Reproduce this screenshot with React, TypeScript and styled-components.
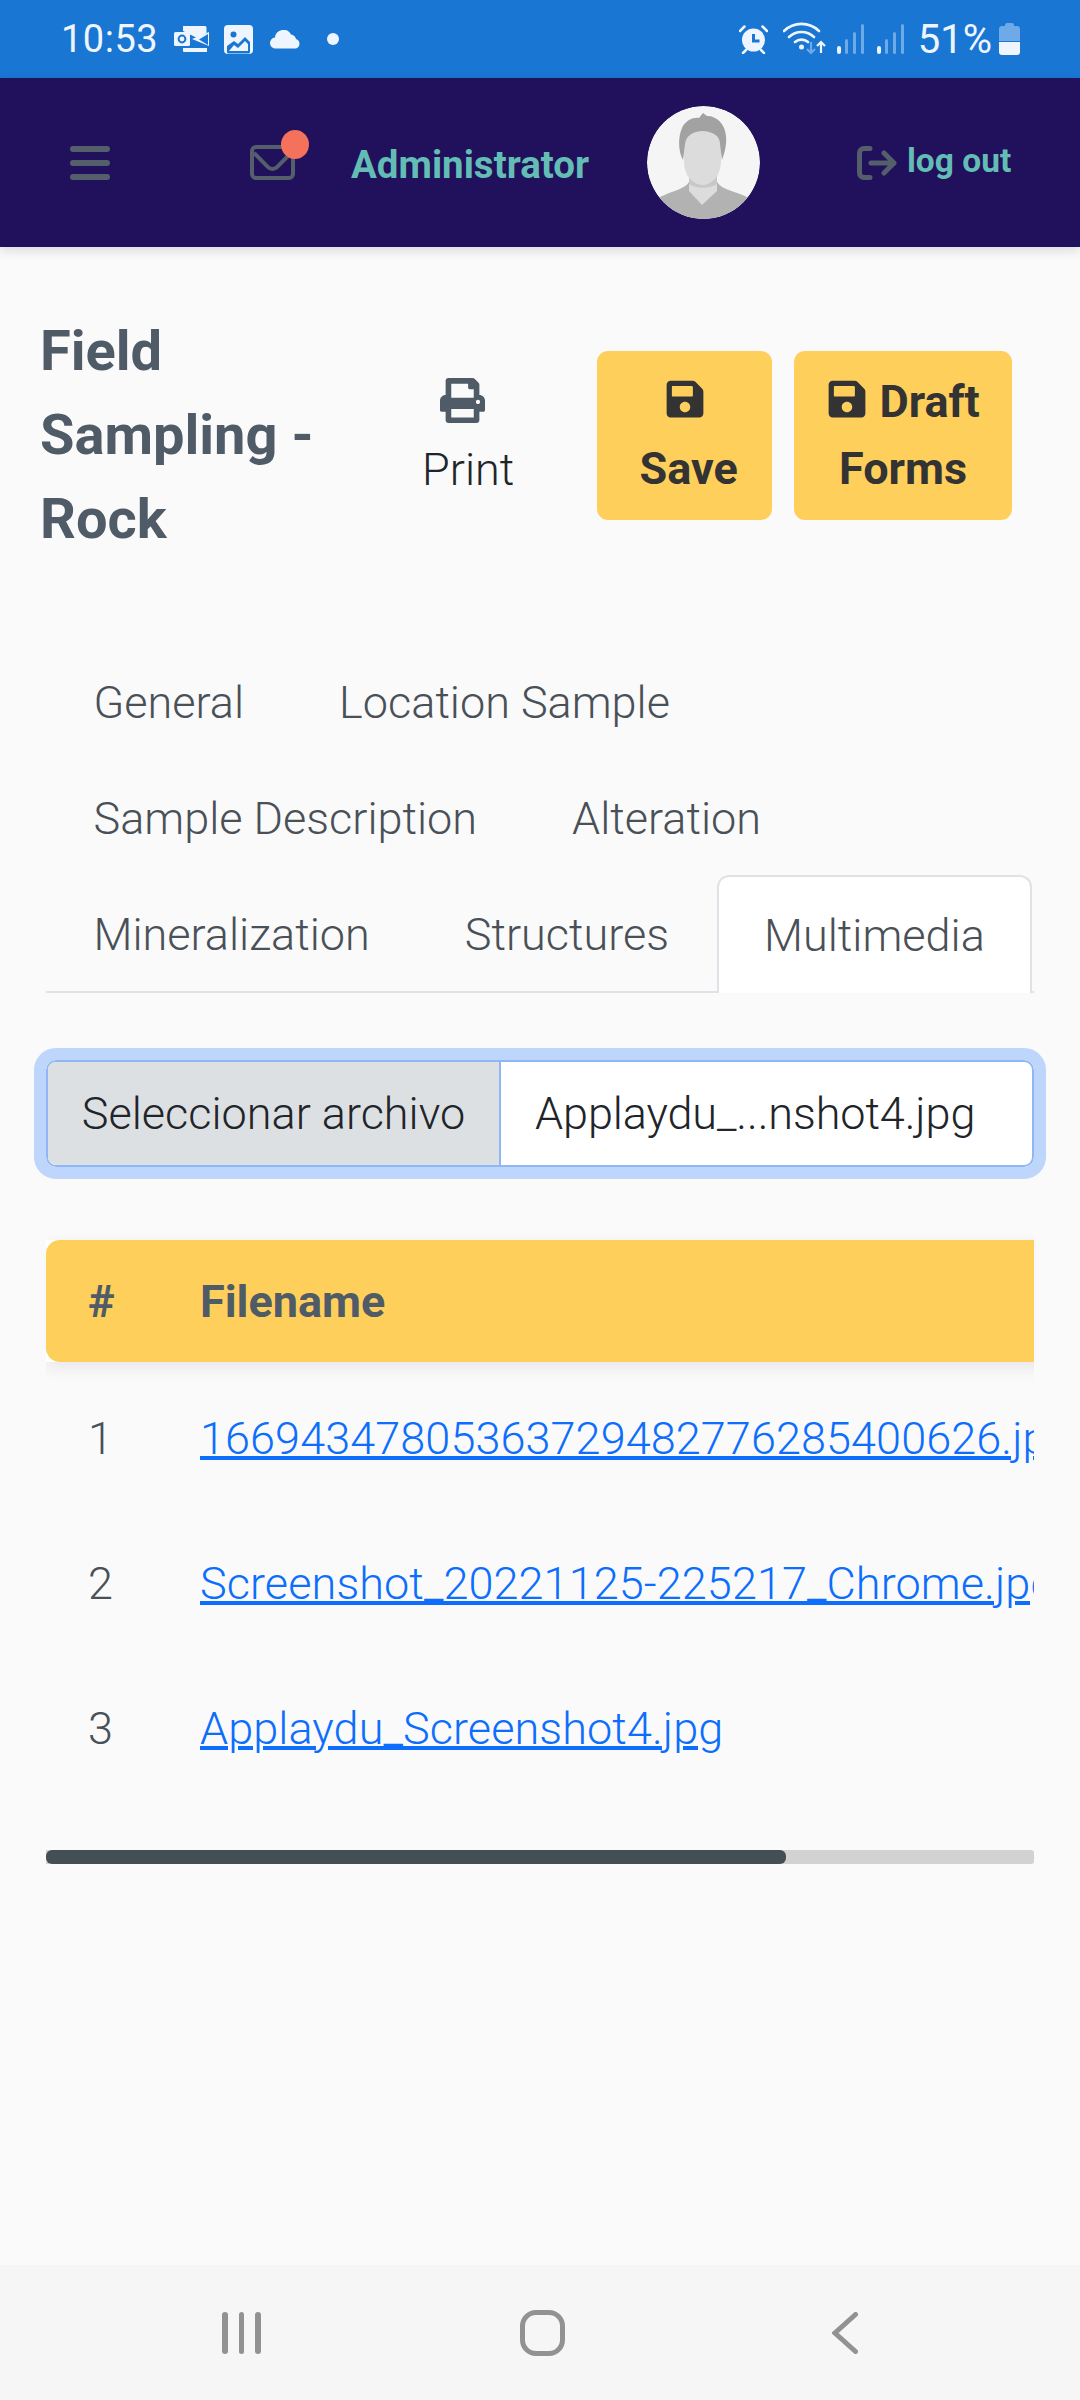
import React from 'react';
import styled, { createGlobalStyle } from 'styled-components';
import { FaPrint, FaSave } from 'react-icons/fa';

const GlobalStyle = createGlobalStyle`
    html, body {
        margin: 0;
        padding: 0;
        background: #fafafa;
        font-family: 'Roboto', 'Liberation Sans', sans-serif;
    }
    * {
        box-sizing: border-box;
    }
`;

const tabRows = [
    [{ label: 'General' }, { label: 'Location Sample' }],
    [{ label: 'Sample Description' }, { label: 'Alteration' }],
    [{ label: 'Mineralization' }, { label: 'Structures' }, { label: 'Multimedia', active: true }],
];

const files = [
    '16694347805363729482776285400626.jpg',
    'Screenshot_20221125-225217_Chrome.jpg',
    'Applaydu_Screenshot4.jpg',
];

const OutlookIcon = () => (
    <svg width="35" height="26" viewBox="0 0 35 26" fill="#eef5fe">
        <path d="M9 0h22a1.500 1.500 0 0 1 1.500 1.500V7L23 12 9 5z" />
        <rect x="0" y="6" width="16" height="14" rx="1.500" />
        <circle cx="8" cy="13" r="3.400" fill="none" stroke="#1976d2" strokeWidth="2" />
        <path d="M18 13l17-7v14zM9 22h24v4H10a1 1 0 0 1-1-1z" />
        <path d="M34 8l-9 5.500 9 5.500" fill="#1976d2" />
    </svg>
);

const PhotoIcon = () => (
    <svg width="29" height="29" viewBox="0 0 29 29">
        <rect width="29" height="29" rx="4" fill="#eef5fe" />
        <circle cx="9.500" cy="9.500" r="3" fill="#1976d2" />
        <path d="M3 21l7-5 4 3 7-7 5 5v10a1.500 1.500 0 0 1-1.500 1.500h-20A1.500 1.500 0 0 1 3 27z" fill="#1976d2" />
        <path d="M5 26l5-6 4 3 7-7 3 3v7z" fill="#eef5fe" />
    </svg>
);

const CloudIcon = () => (
    <svg width="33" height="19" viewBox="0 0 33 19" fill="#eef5fe">
        <path d="M7 18.500a5.500 5.500 0 0 1-1-11 8.500 8.500 0 0 1 16-3 6 6 0 0 1 5 4.500 5 5 0 0 1 0 9.500z" />
    </svg>
);

const AlarmIcon = () => (
    <svg width="29" height="29" viewBox="0 0 29 29">
        <circle cx="14.500" cy="15" r="11.500" fill="#eef5fe" />
        <path d="M14.500 9v7h6" fill="none" stroke="#1976d2" strokeWidth="3" />
        <path d="M1 6l4.500-4.500M28 6l-4.500-4.500M4 28l3-3M25 28l-3-3" stroke="#eef5fe" strokeWidth="2.500" strokeLinecap="round" />
    </svg>
);

const WifiSvg = styled.svg`
    margin: -3px -3px 0 2px;
`;

const WifiIcon = () => (
    <WifiSvg width="44" height="32" viewBox="0 0 44 32" fill="none">
        <path d="M1 9a25 25 0 0 1 35 0M6 15a18 18 0 0 1 25 0M12 20a10 10 0 0 1 13 0" stroke="#eef5fe" strokeWidth="2.600" strokeLinecap="round" />
        <circle cx="18.500" cy="25" r="2.500" fill="#eef5fe" />
        <path d="M28 20v11M24 27l4 4 4-4" stroke="#6ea9e8" strokeWidth="2.200" />
        <path d="M38 31V20M34 24l4-4 4 4" stroke="#eef5fe" strokeWidth="2.200" />
    </WifiSvg>
);

const SignalIcon = () => (
    <svg width="27" height="30" viewBox="0 0 27 30">
        <rect x="0" y="22" width="4" height="8" rx="2" fill="#eef5fe" />
        <rect x="8" y="15" width="3" height="15" rx="1.500" fill="#6ea9e8" />
        <rect x="16" y="8" width="3" height="22" rx="1.500" fill="#6ea9e8" />
        <rect x="24" y="0" width="3" height="30" rx="1.500" fill="#6ea9e8" />
    </svg>
);

const BatteryIcon = () => (
    <svg width="21" height="32" viewBox="0 0 21 32">
        <path d="M6 2a2 2 0 0 1 2-2h5a2 2 0 0 1 2 2v1h3a3 3 0 0 1 3 3v12H0V6a3 3 0 0 1 3-3h3z" fill="#6ea9e8" />
        <path d="M0 19h21v10a3 3 0 0 1-3 3H3a3 3 0 0 1-3-3z" fill="#eef5fe" />
    </svg>
);

const MailIcon = () => (
    <svg width="45" height="35" viewBox="0 0 45 35" fill="none" stroke="#555f6b" strokeWidth="4">
        <rect x="2" y="2" width="41" height="31" rx="4" />
        <path d="M4 8l14 14a6 6 0 0 0 9 0L41 8" />
    </svg>
);

const LogoutIcon = () => (
    <svg width="40" height="34" viewBox="0 0 40 34" fill="none" stroke="#555f6b" strokeWidth="5" strokeLinecap="round" strokeLinejoin="round">
        <path d="M13 2.500H7a4.500 4.500 0 0 0-4.500 4.500v20A4.500 4.500 0 0 0 7 31.500h6" />
        <path d="M14 17h23M27 7l10 10-10 10" />
    </svg>
);

const AvatarPicture = () => (
    <svg width="113" height="113" viewBox="0 0 113 113">
        <defs>
            <clipPath id="avatar-clip">
                <circle cx="56.500" cy="56.500" r="56.500" />
            </clipPath>
        </defs>
        <g clipPath="url(#avatar-clip)">
            <rect width="113" height="113" fill="#f5f5f6" />
            <path d="M13 91c12-6 25-8 29-15h28c5 8 18 9 30 15v22H13z" fill="#b2b2b2" />
            <path d="M42 68v17l13 14 15-14V68z" fill="#dcdcdc" />
            <path d="M42 70h28v8c-8 5-20 5-28 0z" fill="#c8c8c8" />
            <path d="M37 36c0-8 8-12 19-12s18 4 18 12v19c0 15-10 24-18 24-10 0-19-9-19-24z" fill="#dcdcdc" />
            <path d="M36 54c-5-9-5-23-1-32 4-9 13-11 17-10l4-5 4 3c10 0 18 8 19 20 1 10-2 18-4 24l-2-16c0-7-5-12-17-13-10 0-17 5-18 13z" fill="#a2a2a2" />
        </g>
    </svg>
);

const App = () => {
    return (
        <Page>
            <GlobalStyle />
            <StatusBar>
                <StatusGroup>
                    <StatusTime>10:53</StatusTime>
                    <OutlookIcon />
                    <PhotoIcon />
                    <CloudIcon />
                    <StatusDot />
                </StatusGroup>
                <RightStatusGroup>
                    <AlarmIcon />
                    <WifiIcon />
                    <SignalIcon />
                    <SignalIcon />
                    <StatusBattery>51%</StatusBattery>
                    <BatteryIcon />
                </RightStatusGroup>
            </StatusBar>

            <NavBar>
                <Hamburger>
                    <span />
                    <span />
                    <span />
                </Hamburger>
                <MailButton>
                    <MailIcon />
                    <MailBadge />
                </MailButton>
                <UserName>Administrator</UserName>
                <Avatar>
                    <AvatarPicture />
                </Avatar>
                <Logout>
                    <LogoutIcon />
                    <span>log out</span>
                </Logout>
            </NavBar>

            <Content>
                <TitleRow>
                    <Title>Field Sampling - Rock</Title>
                    <PrintButton>
                        <FaPrint />
                        <span>Print</span>
                    </PrintButton>
                    <ActionButton $width={177}>
                        <FaSave />
                        <SaveLabel>Save</SaveLabel>
                    </ActionButton>
                    <ActionButton $width={221}>
                        <FaSave /> Draft Forms
                    </ActionButton>
                </TitleRow>

                <Tabs>
                    {tabRows.map((row, i) => (
                        <TabRow key={i}>
                            {row.map((tab) => (
                                <Tab key={tab.label} $active={tab.active}>
                                    {tab.label}
                                </Tab>
                            ))}
                        </TabRow>
                    ))}
                </Tabs>

                <FileInput>
                    <FileButton>Seleccionar archivo</FileButton>
                    <FileName>Applaydu_...nshot4.jpg</FileName>
                </FileInput>

                <TableWrap>
                    <HeadRow>
                        <HeadFill>
                            <HeadCell>#</HeadCell>
                            <HeadCell>Filename</HeadCell>
                        </HeadFill>
                    </HeadRow>
                    <TableBody>
                        {files.map((file, i) => (
                            <BodyRow key={file}>
                                <span>{i + 1}</span>
                                <FileLink href="#">{file}</FileLink>
                            </BodyRow>
                        ))}
                    </TableBody>
                </TableWrap>
                <ScrollTrack>
                    <ScrollThumb />
                </ScrollTrack>
            </Content>

            <SystemNav>
                <RecentsIcon>
                    <span />
                    <span />
                    <span />
                </RecentsIcon>
                <HomeIcon />
                <svg width="26" height="42" viewBox="0 0 26 42" fill="none" stroke="#929292" strokeWidth="5" strokeLinecap="round" strokeLinejoin="miter">
                    <path d="M23.500 2.500L3 21l20.500 18.500" />
                </svg>
            </SystemNav>
        </Page>
    );
};

const Page = styled.div`
    position: relative;
    width: 1080px;
    height: 2400px;
    display: flex;
    flex-direction: column;
    overflow: hidden;
    background: #fafafa;
`;

const StatusBar = styled.div`
    height: 78px;
    flex: none;
    display: flex;
    align-items: center;
    justify-content: space-between;
    padding: 0 60px 0 61px;
    background: #1976d2;
    color: #eef5fe;
`;
const StatusGroup = styled.div`
    display: flex;
    align-items: center;
    gap: 15.5px;
`;
const RightStatusGroup = styled(StatusGroup)`
    gap: 13px;
`;
const StatusTime = styled.span`
    font-size: 38px;
    letter-spacing: 0.5px;
`;
const StatusDot = styled.span`
    width: 12px;
    height: 12px;
    margin-left: 10px;
    border-radius: 50%;
    background: #eef5fe;
`;
const StatusBattery = styled.span`
    font-size: 40px;
    margin: 0 -6px 0 1px;
`;

const NavBar = styled.div`
    height: 169px;
    flex: none;
    display: flex;
    align-items: center;
    padding-left: 70px;
    background: #21105c;
    box-shadow: 0 4px 10px rgba(0, 0, 0, 0.12);
    z-index: 1;
`;
const Hamburger = styled.div`
    width: 40px;
    display: flex;
    flex-direction: column;
    gap: 8px;
    margin-right: 140px;
    span {
        height: 6px;
        border-radius: 3px;
        background: #555f6b;
    }
`;
const MailButton = styled.div`
    position: relative;
    display: flex;
    width: 45px;
    margin-right: 56px;
`;
const MailBadge = styled.span`
    position: absolute;
    top: -15px;
    right: -14px;
    width: 28px;
    height: 29px;
    border-radius: 50%;
    background: #f4715b;
`;
const UserName = styled.span`
    width: 296px;
    padding-top: 4px;
    font-size: 38.5px;
    font-weight: 700;
    color: #63bdb5;
`;
const Avatar = styled.div`
    width: 113px;
    height: 113px;
    margin-right: 97px;
    border-radius: 50%;
    overflow: hidden;
`;
const Logout = styled.div`
    display: flex;
    align-items: center;
    gap: 10px;
    font-size: 33.5px;
    font-weight: 700;
    color: #63bdb5;
    span {
        position: relative;
        top: -2px;
    }
`;

const Content = styled.div`
    flex: 1;
    padding: 0 46px;
`;
const TitleRow = styled.div`
    display: flex;
    align-items: center;
    margin: 62px 0 0 -6px;
`;
const Title = styled.h1`
    width: 304px;
    margin: 0;
    font-size: 56px;
    line-height: 84px;
    font-weight: 700;
    color: #4f5b66;
`;
const PrintButton = styled.div`
    width: 263px;
    display: flex;
    flex-direction: column;
    align-items: center;
    gap: 20px;
    padding-top: 3px;
    font-size: 45px;
    font-weight: 300;
    color: #212529;
    svg {
        margin-right: 12px;
        font-size: 45px;
        color: #4f5b66;
    }
`;
const ActionButton = styled.div<{ $width: number }>`
    width: ${(p) => p.$width}px;
    height: 169px;
    margin-right: 22px;
    padding: 17px 20px 0;
    border-radius: 11px;
    background: #ffcf5c;
    font-size: 45px;
    line-height: 67px;
    font-weight: 700;
    color: #333;
    text-align: center;
    svg {
        font-size: 42px;
        vertical-align: -3px;
    }
`;
const SaveLabel = styled.span`
    display: block;
    margin-left: 8px;
`;

const Tabs = styled.div`
    margin-top: 82px;
    border-bottom: 2px solid #dfe2e6;
`;
const TabRow = styled.div`
    display: flex;
    height: 116px;
`;
const Tab = styled.div<{ $active?: boolean }>`
    display: flex;
    align-items: center;
    height: ${(p) => (p.$active ? '118px' : '116px')};
    padding: 0 45.5px;
    font-size: 45px;
    font-weight: 300;
    color: #495057;
    white-space: nowrap;
    border: 2px solid ${(p) => (p.$active ? '#dfe2e6' : 'transparent')};
    border-bottom: none;
    border-radius: 12px 12px 0 0;
    background: ${(p) => (p.$active ? '#fff' : 'transparent')};
`;

const FileInput = styled.div`
    display: flex;
    height: 107px;
    margin-top: 67px;
    border: 2px solid #8fb7f5;
    border-radius: 10px;
    background: #fff;
    overflow: hidden;
    outline: 12px solid #bed6fb;
    font-size: 45px;
    font-weight: 300;
    color: #212529;
`;
const FileButton = styled.div`
    width: 453px;
    display: flex;
    align-items: center;
    justify-content: center;
    background: #dde0e3;
    border-right: 2px solid #8fb7f5;
`;
const FileName = styled.div`
    display: flex;
    align-items: center;
    padding-left: 34px;
    letter-spacing: -0.1px;
`;

const TableWrap = styled.div`
    margin-top: 68px;
    padding-top: 5px;
    overflow: hidden;
`;
const HeadRow = styled.div`
    width: 1319px;
    height: 122px;
    background: #fff;
    box-shadow: 0 6px 16px rgba(0, 0, 0, 0.08);
`;
const HeadFill = styled.div`
    height: 100%;
    display: grid;
    grid-template-columns: 112px 1fr;
    align-items: center;
    padding-left: 42px;
    border-radius: 14px 0 0 14px;
    background: #ffcf5c;
`;
const HeadCell = styled.div`
    font-size: 45px;
    font-weight: 700;
    color: #4f5b66;
`;
const TableBody = styled.div`
    padding-top: 4px;
`;
const BodyRow = styled.div`
    width: 1319px;
    height: 145px;
    display: grid;
    grid-template-columns: 112px 1fr;
    align-items: center;
    padding-left: 42px;
    font-size: 45px;
    font-weight: 300;
    color: #495057;
    white-space: nowrap;
`;
const FileLink = styled.a`
    justify-self: start;
    color: #0d6efd;
    letter-spacing: 0.08px;
    text-decoration: underline;
    text-decoration-thickness: 4px;
`;

const ScrollTrack = styled.div`
    height: 14px;
    margin-top: 49px;
    background: #d2d2d2;
    border-radius: 0 3px 3px 0;
`;
const ScrollThumb = styled.div`
    width: 740px;
    height: 100%;
    border-radius: 6px;
    background: #434e55;
`;

const SystemNav = styled.div`
    height: 135px;
    flex: none;
    display: flex;
    align-items: center;
    justify-content: space-between;
    padding: 0 222px;
    background: #f6f6f6;
`;
const RecentsIcon = styled.div`
    display: flex;
    gap: 11px;
    span {
        width: 5.500px;
        height: 42px;
        border-radius: 3px;
        background: #929292;
    }
`;
const HomeIcon = styled.div`
    width: 45px;
    height: 46px;
    margin-right: 7px;
    border: 5px solid #929292;
    border-radius: 16px;
`;

export default App;
